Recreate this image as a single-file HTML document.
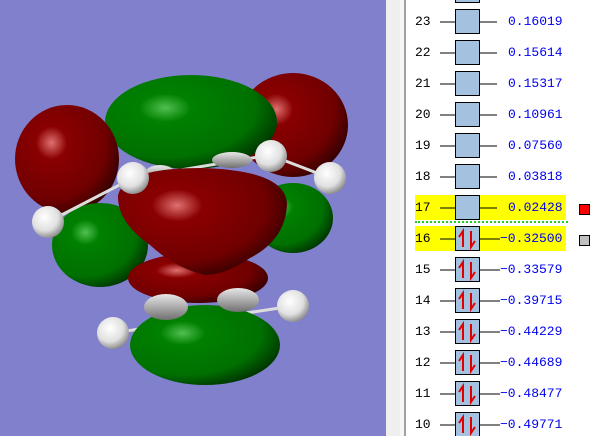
<!DOCTYPE html>
<html><head><style>
html,body{margin:0;padding:0;width:605px;height:436px;overflow:hidden;background:#fff;font-family:"Liberation Mono",monospace;}
#mol{position:absolute;left:0;top:0;width:386px;height:436px;background:#8080cc;}
#strip{position:absolute;left:386px;top:0;width:14px;height:436px;background:#efefef;}
#strip2{position:absolute;left:400px;top:0;width:4px;height:436px;background:#f6f6f6;}
#line{position:absolute;left:404px;top:0;width:2px;height:436px;background:#a0a0a0;}
.t{position:absolute;font-size:13px;line-height:14px;}
</style></head><body>
<div id="mol">
<svg width="386" height="436">
<defs>
<radialGradient id="r" cx="0.35" cy="0.35" r="0.75"><stop offset="0" stop-color="#e07070"/><stop offset="0.2" stop-color="#8a0000"/><stop offset="0.7" stop-color="#700000"/><stop offset="1" stop-color="#280000"/></radialGradient>
<radialGradient id="g" cx="0.35" cy="0.35" r="0.75"><stop offset="0" stop-color="#50c050"/><stop offset="0.2" stop-color="#008000"/><stop offset="0.7" stop-color="#007000"/><stop offset="1" stop-color="#002800"/></radialGradient>
<radialGradient id="h" cx="0.4" cy="0.35" r="0.7"><stop offset="0" stop-color="#ffffff"/><stop offset="0.6" stop-color="#e0e0e0"/><stop offset="1" stop-color="#808080"/></radialGradient>
<linearGradient id="c" x1="0" y1="0" x2="0" y2="1"><stop offset="0" stop-color="#e8e8e8"/><stop offset="1" stop-color="#707070"/></linearGradient>
</defs>
<ellipse cx="293" cy="125" rx="55" ry="52" fill="url(#r)"/>
<ellipse cx="191" cy="122" rx="86" ry="47" fill="url(#g)"/>
<ellipse cx="67" cy="159" rx="52" ry="54" fill="url(#r)"/>
<ellipse cx="293" cy="218" rx="40" ry="35" fill="url(#g)"/>
<ellipse cx="100" cy="245" rx="48" ry="42" fill="url(#g)"/>
<g stroke="#ddd" stroke-width="3"><line x1="133" y1="178" x2="270" y2="155"/><line x1="48" y1="222" x2="133" y2="178"/><line x1="270" y1="155" x2="330" y2="178"/><line x1="113" y1="333" x2="293" y2="306"/></g>
<ellipse cx="160" cy="175" rx="16" ry="10" fill="url(#c)"/>
<ellipse cx="232" cy="160" rx="20" ry="8" fill="url(#c)"/>
<ellipse cx="205" cy="345" rx="75" ry="40" fill="url(#g)"/>
<ellipse cx="198" cy="278" rx="70" ry="25" fill="url(#r)"/>
<path d="M118 195 Q125 168 200 168 Q287 170 287 205 Q285 240 250 258 Q225 275 205 275 Q175 268 150 245 Q117 222 118 195Z" fill="url(#r)"/>
<ellipse cx="166" cy="307" rx="22" ry="13" fill="url(#c)"/>
<ellipse cx="238" cy="300" rx="21" ry="12" fill="url(#c)"/>
<circle cx="133" cy="178" r="16" fill="url(#h)"/>
<circle cx="271" cy="156" r="16" fill="url(#h)"/>
<circle cx="48" cy="222" r="16" fill="url(#h)"/>
<circle cx="330" cy="178" r="16" fill="url(#h)"/>
<circle cx="113" cy="333" r="16" fill="url(#h)"/>
<circle cx="293" cy="306" r="16" fill="url(#h)"/>
</svg>
</div>
<div id="strip"></div><div id="strip2"></div><div id="line"></div>
<div style="position:absolute;left:415px;top:195px;width:151px;height:25px;background:#ffff00"></div>
<div style="position:absolute;left:415px;top:226px;width:151px;height:25px;background:#ffff00"></div>
<div style="position:absolute;left:415px;top:221px;width:153px;border-top:2px dotted #22cc22"></div>
<div style="position:absolute;left:579px;top:204px;width:9px;height:9px;background:#f00;border:1px solid #000"></div>
<div style="position:absolute;left:579px;top:235px;width:9px;height:9px;background:#c0c0c0;border:1px solid #000"></div>
<svg style="position:absolute;left:0;top:0" width="605" height="436">
<g id="rows"></g>
</svg>
<div id="txt"></div>
<script>
var vals={23:"0.16019",22:"0.15614",21:"0.15317",20:"0.10961",19:"0.07560",18:"0.03818",17:"0.02428",16:"-0.32500",15:"-0.33579",14:"-0.39715",13:"-0.44229",12:"-0.44689",11:"-0.48477",10:"-0.49771"};
var g=document.getElementById('rows'),s='',t='';
for(var n=24;n>=10;n--){var y=22+(23-n)*31;var occ=n<=16;
s+='<line x1="440" y1="'+y+'" x2="455" y2="'+y+'" stroke="#000"/>';
s+='<line x1="480" y1="'+y+'" x2="'+(occ?500:497)+'" y2="'+y+'" stroke="#000"/>';
s+='<rect x="455.5" y="'+(y-12.5)+'" width="24" height="24" fill="#a4c2e0" stroke="#000"/>';
if(occ){s+='<path d="M463 '+(y+8)+' V'+(y-8)+' L459 '+(y-2)+'M471 '+(y-8)+' V'+(y+8)+' L475 '+(y+2)+'" stroke="#e00000" stroke-width="2" fill="none"/>';}
if(vals[n]){t+='<div class="t" style="left:415px;top:'+(y-7)+'px">'+n+'</div>';
var v=vals[n];t+='<div class="t" style="color:#0000ee;left:'+(v[0]=='-'?500:508)+'px;top:'+(y-7)+'px">'+v.replace('-','\u2212')+'</div>';}
}
g.innerHTML=s;document.getElementById('txt').innerHTML=t;
</script>
</body></html>
